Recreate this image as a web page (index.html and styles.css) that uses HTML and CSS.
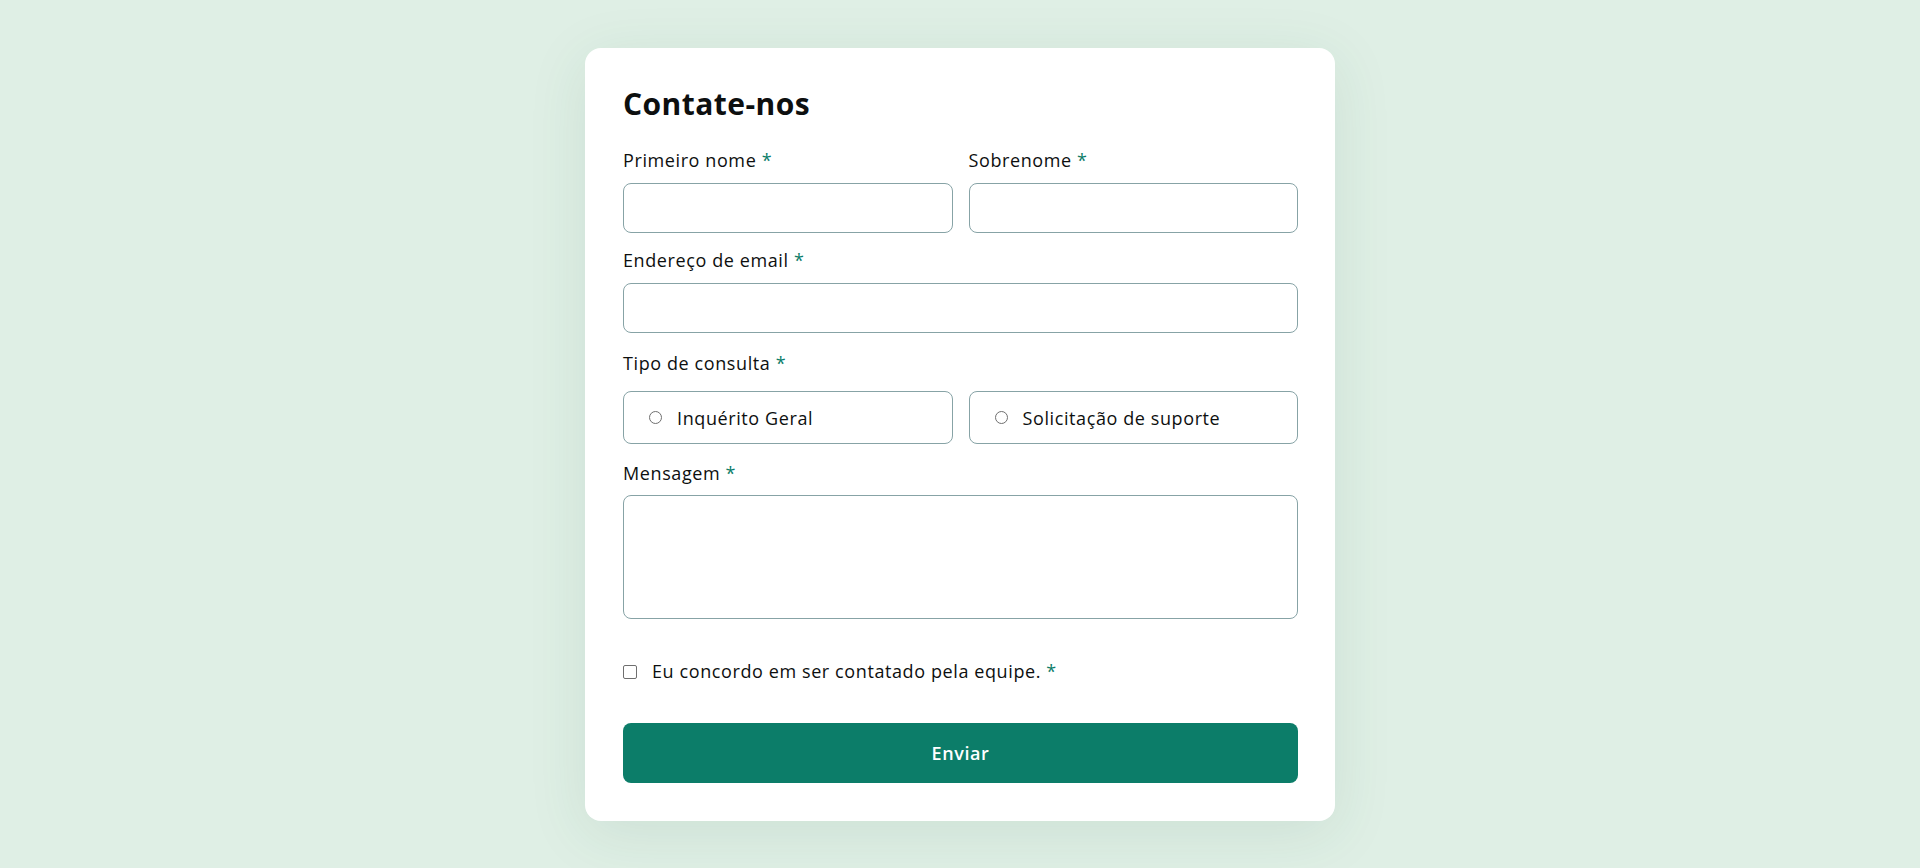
FILE: index.html
```html
<!DOCTYPE html>
<html lang="pt-BR">
<head>
<meta charset="utf-8">
<title>Contate-nos</title>
<link rel="stylesheet" href="styles.css">
</head>
<body>
<main class="page">
  <form class="card">
    <h1 class="title">Contate-nos</h1>

    <div class="row">
      <div class="field">
        <label class="label" for="fname">Primeiro nome <span class="req">*</span></label>
        <input class="input" id="fname" type="text">
      </div>
      <div class="field">
        <label class="label" for="lname">Sobrenome <span class="req">*</span></label>
        <input class="input" id="lname" type="text">
      </div>
    </div>

    <div class="field field-email">
      <label class="label" for="email">Endereço de email <span class="req">*</span></label>
      <input class="input" id="email" type="email">
    </div>

    <div class="field field-type">
      <span class="label label-type">Tipo de consulta <span class="req">*</span></span>
      <div class="row">
        <label class="option"><input class="radio" type="radio" name="tipo"><span>Inquérito Geral</span></label>
        <label class="option"><input class="radio" type="radio" name="tipo"><span>Solicitação de suporte</span></label>
      </div>
    </div>

    <div class="field field-msg">
      <label class="label label-msg" for="msg">Mensagem <span class="req">*</span></label>
      <textarea class="textarea" id="msg"></textarea>
    </div>

    <label class="consent"><input class="check" type="checkbox"><span>Eu concordo em ser contatado pela equipe. <span class="req">*</span></span></label>

    <button class="submit" type="button">Enviar</button>
  </form>
</main>
</body>
</html>
```
FILE: styles.css
```css
* { box-sizing: border-box; }

html, body {
  margin: 0;
  height: 100%;
}

body {
  background: #dfefe5;
  font-family: "Open Sans", "Noto Sans", sans-serif;
  color: #0d0f0f;
}

.page {
  display: flex;
  justify-content: center;
  padding-top: 48px;
}

.card {
  width: 750px;
  background: #ffffff;
  border-radius: 16px;
  padding: 38px 37px 38px 38px;
  box-shadow: 0 12px 60px rgba(40, 100, 70, 0.10);
  display: flex;
  flex-direction: column;
}

.title {
  margin: 0 0 26px;
  font-size: 30px;
  line-height: 36px;
  font-weight: 700;
  letter-spacing: 0.45px;
}

.row {
  display: grid;
  grid-template-columns: 1fr 1fr;
  gap: 16px;
}

.field {
  display: flex;
  flex-direction: column;
}

.label {
  font-size: 18px;
  line-height: 24px;
  letter-spacing: 0.6px;
  margin-bottom: 11px;
}

.req {
  color: #0c7d69;
}

.input {
  height: 50px;
  width: 100%;
  border: 1px solid #87a3a6;
  border-radius: 8px;
  font: inherit;
  padding: 0 16px;
  background: #fff;
}

.field-email { margin-top: 15px; }
.field-type { margin-top: 18px; }
.label-type { margin-bottom: 16px; }
.field-msg { margin-top: 17px; }
.label-msg { margin-bottom: 10px; }

.option {
  height: 53px;
  border: 1px solid #87a3a6;
  border-radius: 8px;
  display: flex;
  align-items: center;
  padding-left: 25px;
  gap: 15px;
  font-size: 18px;
  letter-spacing: 0.6px;
  cursor: pointer;
}

.radio {
  appearance: none;
  -webkit-appearance: none;
  margin: 0;
  width: 13px;
  height: 13px;
  border: 1px solid #6f6f6f;
  border-radius: 50%;
  background: #fff;
  flex: none;
}

.textarea {
  height: 124px;
  width: 100%;
  border: 1px solid #87a3a6;
  border-radius: 8px;
  font: inherit;
  resize: none;
  background: #fff;
}

.consent {
  margin-top: 40px;
  display: flex;
  align-items: center;
  gap: 15px;
  font-size: 18px;
  line-height: 24px;
  letter-spacing: 0.6px;
}

.check {
  appearance: none;
  -webkit-appearance: none;
  margin: 0;
  width: 14px;
  height: 14px;
  border: 1px solid #6f6f6f;
  border-radius: 2px;
  background: #fff;
  flex: none;
  position: relative;
  top: 1px;
}

.submit {
  margin-top: 40px;
  height: 60px;
  width: 100%;
  border: none;
  border-radius: 8px;
  background: #0c7d69;
  color: #ffffff;
  font-family: inherit;
  font-size: 18px;
  font-weight: 600;
  letter-spacing: 0.6px;
  cursor: pointer;
}
```
